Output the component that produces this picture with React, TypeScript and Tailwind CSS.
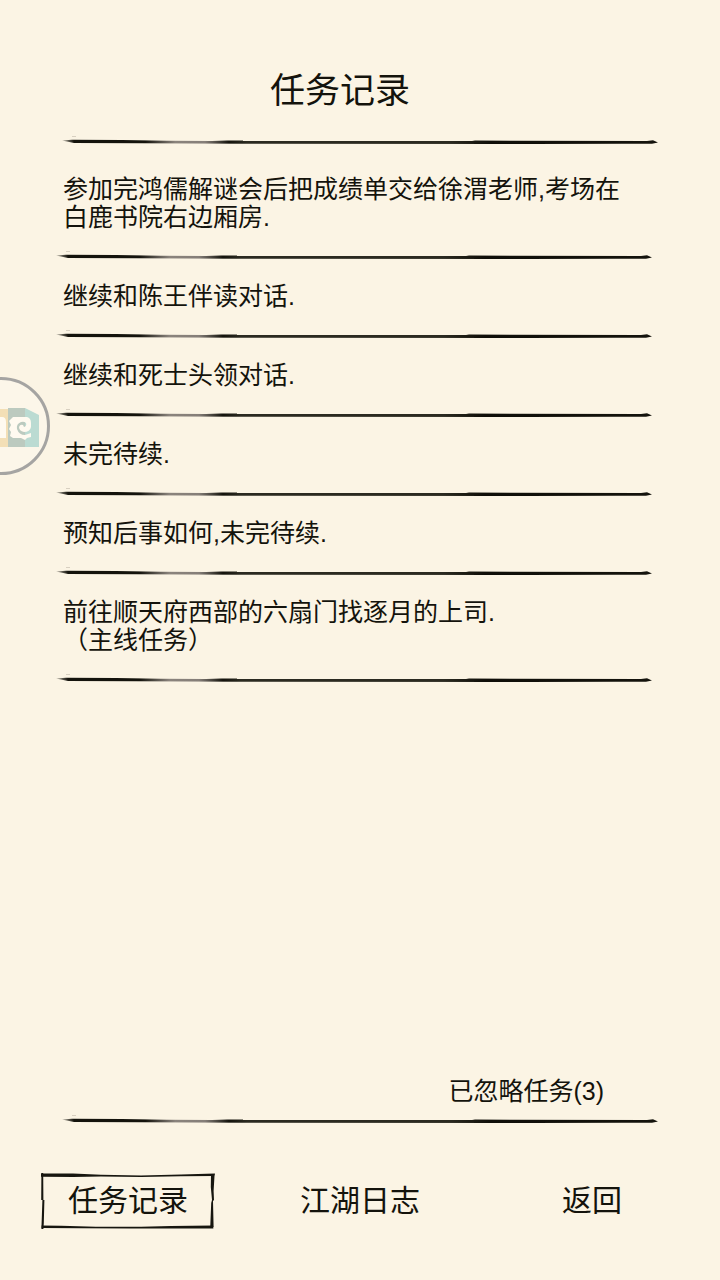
const quests = [
    '参加完鸿儒解谜会后把成绩单交给徐渭老师,考场在白鹿书院右边厢房.',
    '继续和陈王伴读对话.',
    '继续和死士头领对话.',
    '未完待续.',
    '预知后事如何,未完待续.',
    '前往顺天府西部的六扇门找逐月的上司.\n（主线任务）',
]

const tabs = ['任务记录', '江湖日志', '返回']

// a single horizontal brush stroke
function InkRule({ id }: { id: string }) {
    return (
        <svg viewBox="0 0 596 11" preserveAspectRatio="none" aria-hidden="true" className="block h-[11px] w-full">
            <defs>
                <linearGradient id={id} gradientUnits="userSpaceOnUse" x1="0" y1="0" x2="596" y2="0">
                    <stop offset="0" stopColor="#14130c" stopOpacity="0.3" />
                    <stop offset="0.02" stopColor="#14130c" />
                    <stop offset="0.14" stopColor="#14130c" />
                    <stop offset="0.19" stopColor="#8a837c" />
                    <stop offset="0.24" stopColor="#857e78" />
                    <stop offset="0.28" stopColor="#14130c" />
                    <stop offset="0.31" stopColor="#2b2a20" />
                    <stop offset="0.65" stopColor="#2b2a20" />
                    <stop offset="0.72" stopColor="#0f0e08" />
                    <stop offset="1" stopColor="#14130c" />
                </linearGradient>
            </defs>
            <path
                d="M0 4.6 L10 3.8 L60 4 L105 4.8 L150 5 L165 4.4 L181 4.4 L181 4.9 L410 5 L413 4.6 L585 4.9 L591 4.2 L596 6.4 L590 7.8 L560 7.8 L470 8 L181 7.8 L130 7.4 L80 7.2 L12 7 Z"
                fill={`url(#${id})`}
            />
            <path d="M10 0.5 h4" stroke="#d8d0c1" strokeWidth="1" />
        </svg>
    )
}

// rough frame behind the active tab
function InkFrame() {
    return (
        <svg viewBox="0 0 174 56" preserveAspectRatio="none" aria-hidden="true" className="absolute inset-0 h-full w-full">
            <g fill="#17160f">
                <path d="M0 0.6 L32 0.6 L60 1.8 L100 2.4 L140 1.4 L174 0.4 L173 3 L140 3.2 L100 4 L60 3.6 L32 4 L0 3.8 Z" />
                <path d="M0.4 0 L2.2 0 L2.4 27 L3.4 27 L2.8 50 L2.4 56 L0.4 56 L1.4 27 L0.2 27 Z" />
                <path d="M170 1 L173.6 1 L172.6 18 L173 27 L172 28 L172.6 54 L169.2 55 L170.2 30 L171 27 L169.8 14 Z" />
                <path d="M0.6 52.6 L20 52.8 L55 53.8 L100 53.8 L130 53 L172 52.6 L172.4 55.4 L130 55.6 L90 55.6 L40 55.2 L0.6 55 Z" />
            </g>
        </svg>
    )
}

function FloatingBall() {
    return (
        <button
            type="button"
            aria-label="悬浮球"
            className="absolute top-[377px] -left-12 h-[98px] w-[98px] overflow-hidden rounded-full border-[3px] border-[#a5a4a2] bg-[#fcf6e9]"
        >
            <svg viewBox="0 0 92 92" aria-hidden="true" className="h-full w-full">
                <path d="M30 29 H53 V67 H30 Z" fill="#f3dfb6" />
                <path d="M53 28 H70 V67 H53 Z" fill="#bccabf" />
                <path d="M70 28 L84 35 V67 H70 Z" fill="#bbdbd2" />
                <path d="M40 37 H47 Q51 37 51 42 V58 H40 Z" fill="#fffaf0" />
                <path
                    d="M58 37 H72 Q76 38 76 43 V47 Q75 52 69 52 Q64 51 64 47 Q65 44 68 45 L69 47 Q72 46 71 43 Q69 41 66 42 Q61 44 62 49 Q64 55 70 55 L76 53 V57 L72 58 L70 60 L66 58 H58 L55 56 L56 52 L54 49 L56 45 L54 41 Z"
                    fill="#fffaf0"
                />
            </svg>
        </button>
    )
}

export default function App() {
    return (
        <div className="relative flex min-h-screen flex-col overflow-hidden bg-[#fbf4e4] font-['Liberation_Sans','Noto_Sans_CJK_SC',sans-serif] text-[#14130c]">
            <header className="pt-[71px]">
                <h1 className="pr-10 text-center text-[35px] leading-10">任务记录</h1>
                <div className="mt-[25px] px-[62px]">
                    <InkRule id="rule-top" />
                </div>
            </header>

            <main className="flex flex-1 flex-col">
                <ul className="mt-2 mr-[68px] ml-14">
                    {quests.map((quest, i) => (
                        <li key={quest}>
                            <p className="py-5 pr-6 pl-[7px] text-[25px] leading-7 whitespace-pre-line">{quest}</p>
                            <InkRule id={`rule-${i}`} />
                        </li>
                    ))}
                </ul>
                <div className="mt-auto flex justify-end pr-[116px] pb-2.5">
                    <button type="button" className="text-[25px] leading-7">已忽略任务(3)</button>
                </div>
            </main>

            <footer className="pb-[51px]">
                <div className="px-[62px]">
                    <InkRule id="rule-bottom" />
                </div>
                <nav className="mt-[47px] grid grid-cols-3 justify-items-center px-3">
                    {tabs.map((tab, i) => (
                        <button
                            key={tab}
                            type="button"
                            aria-current={i === 0 ? 'page' : undefined}
                            className="relative h-14 w-[174px] text-[30px] leading-10"
                        >
                            {i === 0 && <InkFrame />}
                            {tab}
                        </button>
                    ))}
                </nav>
            </footer>

            <FloatingBall />
        </div>
    )
}
